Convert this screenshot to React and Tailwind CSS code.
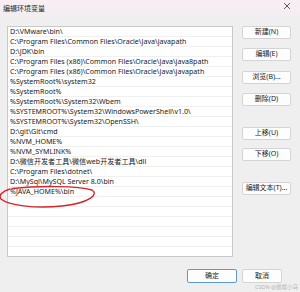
const paths = [
  'D:\\VMware\\bin\\',
  'C:\\Program Files\\Common Files\\Oracle\\Java\\javapath',
  'D:\\JDK\\bin',
  'C:\\Program Files (x86)\\Common Files\\Oracle\\Java\\java8path',
  'C:\\Program Files (x86)\\Common Files\\Oracle\\Java\\javapath',
  '%SystemRoot%\\system32',
  '%SystemRoot%',
  '%SystemRoot%\\System32\\Wbem',
  '%SYSTEMROOT%\\System32\\WindowsPowerShell\\v1.0\\',
  '%SYSTEMROOT%\\System32\\OpenSSH\\',
  'D:\\git\\Git\\cmd',
  '%NVM_HOME%',
  '%NVM_SYMLINK%',
  'D:\\微信开发者工具\\微信web开发者工具\\dll',
  'C:\\Program Files\\dotnet\\',
  'D:\\MySql\\MySQL Server 8.0\\bin',
  '%JAVA_HOME%\\bin',
]

const rows = [...paths, ...Array(6).fill('')]

function Btn({ label, className = '' }) {
  return (
    <div
      className={`h-[13px] w-[49px] flex items-center justify-center bg-[#fdfdfd] border border-[#d4d4d4] rounded-[2px] text-[7px] text-[#1b1b1b] ${className}`}
    >
      {label}
    </div>
  )
}

export default function App() {
  return (
    <div
      className="relative w-[300px] h-[292px] bg-[#f0eff0] overflow-hidden"
      style={{ fontFamily: '"Noto Sans", "Noto Sans CJK SC", sans-serif' }}
    >
      {/* title bar */}
      <div className="h-[18px] flex items-center justify-between px-[3px] bg-gradient-to-b from-[#f8eef3] to-[#f2eef1]">
        <span className="text-[7px] text-[#222]">编辑环境变量</span>
        <svg width="8" height="8" viewBox="0 0 8 8" className="mr-[6px] mb-[6px]">
          <path d="M1 1 L7 7 M7 1 L1 7" stroke="#333" strokeWidth="0.8" />
        </svg>
      </div>

      <div className="flex pl-[7px] pt-[8px]">
        {/* list */}
        <div className="w-[226px] h-[231px] bg-white border border-[#c9c9c9] overflow-hidden">
          {rows.map((r, i) => (
            <div
              key={i}
              className="h-[10px] pl-[2px] border-b border-[#f0f0f0] text-[7.1px] leading-[9px] text-[#1a1a1a] whitespace-nowrap"
            >
              {r}
            </div>
          ))}
        </div>

        {/* side buttons */}
        <div className="ml-[9px] flex flex-col">
          <Btn label="新建(N)" />
          <Btn label="编辑(E)" className="mt-[9px]" />
          <Btn label="浏览(B)..." className="mt-[10px]" />
          <Btn label="删除(D)" className="mt-[9px]" />
          <Btn label="上移(U)" className="mt-[21px]" />
          <Btn label="下移(O)" className="mt-[8px]" />
          <Btn label="编辑文本(T)..." className="mt-[21px]" />
        </div>
      </div>

      {/* bottom buttons */}
      <div className="flex justify-end gap-[5px] pr-[18px] mt-[12px]">
        <div className="h-[14px] w-[50px] flex items-center justify-center bg-[#fdfdfd] border border-[#5b9bd5] rounded-[2px] text-[7px] text-[#1b1b1b]">
          确定
        </div>
        <div className="h-[14px] w-[40px] flex items-center justify-center bg-[#fdfdfd] border border-[#d4d4d4] rounded-[2px] text-[7px] text-[#1b1b1b]">
          取消
        </div>
      </div>

      {/* watermark */}
      <div className="absolute right-[2px] bottom-[1px] text-[5.5px] text-[#b4b4b4]">CSDN @前端小马</div>

      {/* red annotation */}
      <svg className="absolute left-0 top-[180px]" width="110" height="35" viewBox="0 180 110 35">
        <path
          d="M12 188.5 C40 185.5 78 186 92 190 C99 194 90 203 62 206 C34 209 8 205 1 199 C-2 195 3 191 10 189"
          fill="none"
          stroke="#d8232a"
          strokeWidth="1.4"
          strokeLinecap="round"
        />
      </svg>
    </div>
  )
}
